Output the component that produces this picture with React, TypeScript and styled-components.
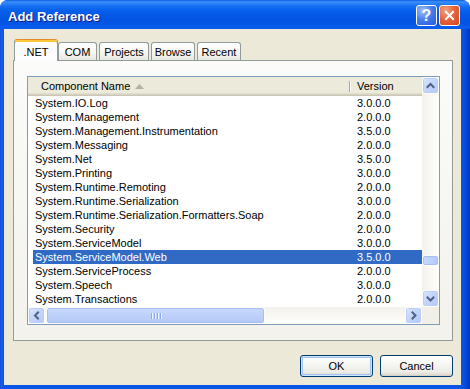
import React from "react";
import styled, { createGlobalStyle } from "styled-components";

const GlobalStyle = createGlobalStyle`
  html, body { margin: 0; padding: 0; background: #ffffff; }
  body { font-family: "Liberation Sans", Arial, sans-serif; font-size: 11px; }
`;

const Window = styled.div`
  width: 470px;
  height: 389px;
  box-sizing: border-box;
  display: flex;
  flex-direction: column;
  background: linear-gradient(to right, #0A3FCF 0px, #1C62EC 1px, #0A55E6 3px, #0A55E6 462px, #0747D6 466px, #0535B8 100%);
  border-radius: 8px 8px 0 0;
  overflow: hidden;
`;

const TitleBar = styled.div`
  height: 29px;
  flex: none;
  display: flex;
  align-items: center;
  box-sizing: border-box;
  padding: 2px 10px 0 8px;
  background: linear-gradient(
    to bottom,
    #0A5AE6 0%,
    #3C8EFA 6%,
    #2A83F8 12%,
    #166FF2 22%,
    #0862EC 34%,
    #0558E6 50%,
    #0454E2 70%,
    #0556E6 85%,
    #0A5EEE 93%,
    #0858E8 100%
  );
`;

const Title = styled.div`
  flex: 1;
  color: #ffffff;
  font-family: "Liberation Sans", Arial, sans-serif;
  font-weight: bold;
  font-size: 13px;
  padding-top: 2px;
  text-shadow: 1px 1px 0 #0A1883;
`;

const CaptionButton = styled.div<{ $variant: "help" | "close" }>`
  width: 21px;
  height: 21px;
  box-sizing: border-box;
  border: 1px solid #ffffff;
  border-radius: 3px;
  display: flex;
  align-items: center;
  justify-content: center;
  color: #ffffff;
  font-family: "Liberation Sans", Arial, sans-serif;
  font-weight: bold;
  font-size: 16px;
  background: ${(p) =>
    p.$variant === "close"
      ? "radial-gradient(circle at 30% 25%, #F5A285 0%, #E8643A 45%, #D2471F 100%)"
      : "radial-gradient(circle at 30% 25%, #A5C2FA 0%, #4A7FF0 45%, #2456D8 100%)"};
  & + & {
    margin-left: 2px;
  }
`;

const Client = styled.div`
  flex: 1;
  margin: 0 9px 4px 4px;
  background: #ECE9D8;
  display: flex;
  flex-direction: column;
  padding: 10px 8px 8px 9px;
  min-height: 0;
`;

const TabStrip = styled.div`
  display: flex;
  align-items: flex-end;
  height: 22px;
  padding-left: 1px;
  margin-bottom: -1px;
  position: relative;
  z-index: 1;
  flex: none;
`;

const Tab = styled.div<{ $active?: boolean; $w: number }>`
  width: ${(p) => p.$w}px;
  box-sizing: border-box;
  display: flex;
  align-items: center;
  justify-content: center;
  color: #000;
  white-space: nowrap;
  height: ${(p) => (p.$active ? 22 : 18)}px;
  margin-bottom: ${(p) => (p.$active ? 0 : 1)}px;
  margin-right: ${(p) => (p.$active ? 0 : 2)}px;
  border: 1px solid #919B9C;
  border-bottom: none;
  border-radius: 3px 3px 0 0;
  ${(p) =>
    p.$active
      ? `border-top: 1px solid #E68B2C;
         box-shadow: inset 0 2px 0 #FFC83C;
         background: #FCFCFE;
         padding-top: 2px;`
      : `background: linear-gradient(#FFFFFF, #F6F6F3 55%, #E8E7E1);`}
`;

const Panel = styled.div`
  flex: 1;
  min-height: 0;
  border: 1px solid #919B9C;
  background: linear-gradient(#FBFBF9, #F3F2EC);
  padding: 15px 12px 15px 13px;
  display: flex;
`;

const ListView = styled.div`
  flex: 1;
  border: 1px solid #7F9DB9;
  background: #ffffff;
  display: grid;
  grid-template-columns: 1fr 17px;
  grid-template-rows: 1fr 17px;
  overflow: hidden;
`;

const ListContent = styled.div`
  overflow: hidden;
  display: flex;
  flex-direction: column;
  min-width: 0;
`;

const Header = styled.div`
  display: grid;
  grid-template-columns: 322px 1fr;
  height: 19px;
  flex: none;
  background: #EBEADB;
  box-shadow: inset 0 -1px 0 #CBC7B8, inset 0 -2px 0 #D6D2C2, inset 0 -3px 0 #E2DECD;
`;

const HeaderCell = styled.div<{ $pad: number; $divider?: boolean }>`
  position: relative;
  display: flex;
  align-items: center;
  padding-left: ${(p) => p.$pad}px;
  padding-bottom: 1px;
  color: #000;
  white-space: nowrap;
  &::after {
    content: "";
    display: ${(p) => (p.$divider ? "block" : "none")};
    position: absolute;
    right: 0;
    top: 4px;
    bottom: 4px;
    width: 1px;
    background: #ACA899;
    box-shadow: 1px 0 0 #ffffff;
  }
`;

const SortArrow = styled.svg`
  margin-left: 5px;
  width: 9px;
  height: 5px;
`;

const Row = styled.div<{ $selected?: boolean }>`
  display: grid;
  grid-template-columns: 317px 1fr;
  height: 14px;
  line-height: 14px;
  margin-left: 5px;
  flex: none;
  background: ${(p) => (p.$selected ? "#316AC5" : "transparent")};
  color: ${(p) => (p.$selected ? "#ffffff" : "#000000")};
  white-space: nowrap;
`;

const Cell = styled.div<{ $pad: number }>`
  padding-left: ${(p) => p.$pad}px;
  overflow: hidden;
`;

const VScroll = styled.div`
  display: flex;
  flex-direction: column;
  background: linear-gradient(to right, #F3F1EC, #FEFEFB);
`;

const HScroll = styled.div`
  display: flex;
  background: linear-gradient(#F3F1EC, #FEFEFB);
`;

const Track = styled.div<{ $vertical?: boolean }>`
  flex: 1;
  display: flex;
  flex-direction: ${(p) => (p.$vertical ? "column" : "row")};
`;

const ScrollButton = styled.div`
  width: 17px;
  height: 17px;
  flex: none;
  box-sizing: border-box;
  border: 1px solid #FCFCFA;
  border-radius: 3px;
  background: linear-gradient(135deg, #DCE7FD 0%, #C5D6FC 45%, #B4C9F7 100%);
  box-shadow: inset 0 0 0 1px #BACDF6;
  display: flex;
  align-items: center;
  justify-content: center;
`;

const Thumb = styled.div<{ $vertical?: boolean; $offset: number; $length: number }>`
  flex: none;
  box-sizing: border-box;
  border: 1px solid #FCFCFA;
  border-radius: 3px;
  background: ${(p) =>
    p.$vertical
      ? "linear-gradient(to right, #C9D8FC, #BDD0FB 60%, #B2C7F6)"
      : "linear-gradient(#C9D8FC, #BDD0FB 60%, #B2C7F6)"};
  box-shadow: inset 0 0 0 1px #A8BEF2;
  display: flex;
  align-items: center;
  justify-content: center;
  ${(p) =>
    p.$vertical
      ? `width: 17px; height: ${p.$length}px; margin-top: ${p.$offset}px;`
      : `height: 17px; width: ${p.$length}px; margin-left: ${p.$offset}px;`}
`;

const Grip = styled.div`
  display: flex;
  gap: 1px;
  height: 6px;
`;

const GripLine = styled.div`
  width: 1px;
  height: 6px;
  background: #8CA8EC;
  box-shadow: 1px 0 0 #EEF4FE;
  & + & {
    margin-left: 1px;
  }
`;

const Corner = styled.div`
  background: #F1EFE7;
`;

const ButtonRow = styled.div`
  display: flex;
  justify-content: flex-end;
  gap: 7px;
  margin-top: 14px;
  flex: none;
`;

const PushButton = styled.button<{ $default?: boolean }>`
  width: 73px;
  height: 22px;
  padding: 0;
  font-family: "Liberation Sans", Arial, sans-serif;
  font-size: 11px;
  color: #000;
  border: 1px solid #003C74;
  border-radius: 3px;
  background: linear-gradient(#FFFFFF, #F5F5F2 45%, #ECEBE6 80%, #D8D3C9);
  box-shadow: ${(p) =>
    p.$default ? "inset 0 0 0 1px #CEE7FF, inset 0 0 0 2px #A4C2EF" : "inset 0 -1px 0 #D6D0C5"};
`;

type Chevron = "up" | "down" | "left" | "right";

const chevronPaths: Record<Chevron, string> = {
  up: "M4.5 9 L7.5 6 L10.5 9",
  down: "M4.5 6.5 L7.5 9.5 L10.5 6.5",
  left: "M9 4.5 L6 7.5 L9 10.5",
  right: "M6.5 4.5 L9.5 7.5 L6.5 10.5",
};

const Arrow = ({ dir }: { dir: Chevron }) => (
  <svg width="15" height="15" viewBox="0 0 15 15">
    <path d={chevronPaths[dir]} fill="none" stroke="#4D6185" strokeWidth="2" strokeLinecap="square" />
  </svg>
);

const tabs = [
  { label: ".NET", width: 44, active: true },
  { label: "COM", width: 39 },
  { label: "Projects", width: 50 },
  { label: "Browse", width: 44 },
  { label: "Recent", width: 44 },
];

const components: [string, string][] = [
  ["System.IO.Log", "3.0.0.0"],
  ["System.Management", "2.0.0.0"],
  ["System.Management.Instrumentation", "3.5.0.0"],
  ["System.Messaging", "2.0.0.0"],
  ["System.Net", "3.5.0.0"],
  ["System.Printing", "3.0.0.0"],
  ["System.Runtime.Remoting", "2.0.0.0"],
  ["System.Runtime.Serialization", "3.0.0.0"],
  ["System.Runtime.Serialization.Formatters.Soap", "2.0.0.0"],
  ["System.Security", "2.0.0.0"],
  ["System.ServiceModel", "3.0.0.0"],
  ["System.ServiceModel.Web", "3.5.0.0"],
  ["System.ServiceProcess", "2.0.0.0"],
  ["System.Speech", "3.0.0.0"],
  ["System.Transactions", "2.0.0.0"],
];

const selectedName = "System.ServiceModel.Web";

export default function App() {
  return (
    <>
      <GlobalStyle />
      <Window>
        <TitleBar>
          <Title>Add Reference</Title>
          <CaptionButton $variant="help">?</CaptionButton>
          <CaptionButton $variant="close">
            <svg width="11" height="11" viewBox="0 0 11 11">
              <path d="M2 2 L9 9 M9 2 L2 9" stroke="#ffffff" strokeWidth="2" strokeLinecap="square" />
            </svg>
          </CaptionButton>
        </TitleBar>
        <Client>
          <TabStrip>
            {tabs.map((t) => (
              <Tab key={t.label} $active={t.active} $w={t.width}>
                {t.label}
              </Tab>
            ))}
          </TabStrip>
          <Panel>
            <ListView>
              <ListContent>
                <Header>
                  <HeaderCell $pad={13} $divider>
                    Component Name
                    <SortArrow viewBox="0 0 9 5">
                      <path d="M0 5 L4.5 0 L9 5 Z" fill="#B5B1A2" />
                    </SortArrow>
                  </HeaderCell>
                  <HeaderCell $pad={7}>Version</HeaderCell>
                </Header>
                {components.map(([name, version]) => (
                  <Row key={name} $selected={name === selectedName}>
                    <Cell $pad={2}>{name}</Cell>
                    <Cell $pad={7}>{version}</Cell>
                  </Row>
                ))}
              </ListContent>
              <VScroll>
                <ScrollButton>
                  <Arrow dir="up" />
                </ScrollButton>
                <Track $vertical>
                  <Thumb $vertical $offset={161} $length={11} />
                </Track>
                <ScrollButton>
                  <Arrow dir="down" />
                </ScrollButton>
              </VScroll>
              <HScroll>
                <ScrollButton>
                  <Arrow dir="left" />
                </ScrollButton>
                <Track>
                  <Thumb $offset={1} $length={219}>
                    <Grip>
                      <GripLine />
                      <GripLine />
                      <GripLine />
                      <GripLine />
                    </Grip>
                  </Thumb>
                </Track>
                <ScrollButton>
                  <Arrow dir="right" />
                </ScrollButton>
              </HScroll>
              <Corner />
            </ListView>
          </Panel>
          <ButtonRow>
            <PushButton $default>OK</PushButton>
            <PushButton>Cancel</PushButton>
          </ButtonRow>
        </Client>
      </Window>
    </>
  );
}
